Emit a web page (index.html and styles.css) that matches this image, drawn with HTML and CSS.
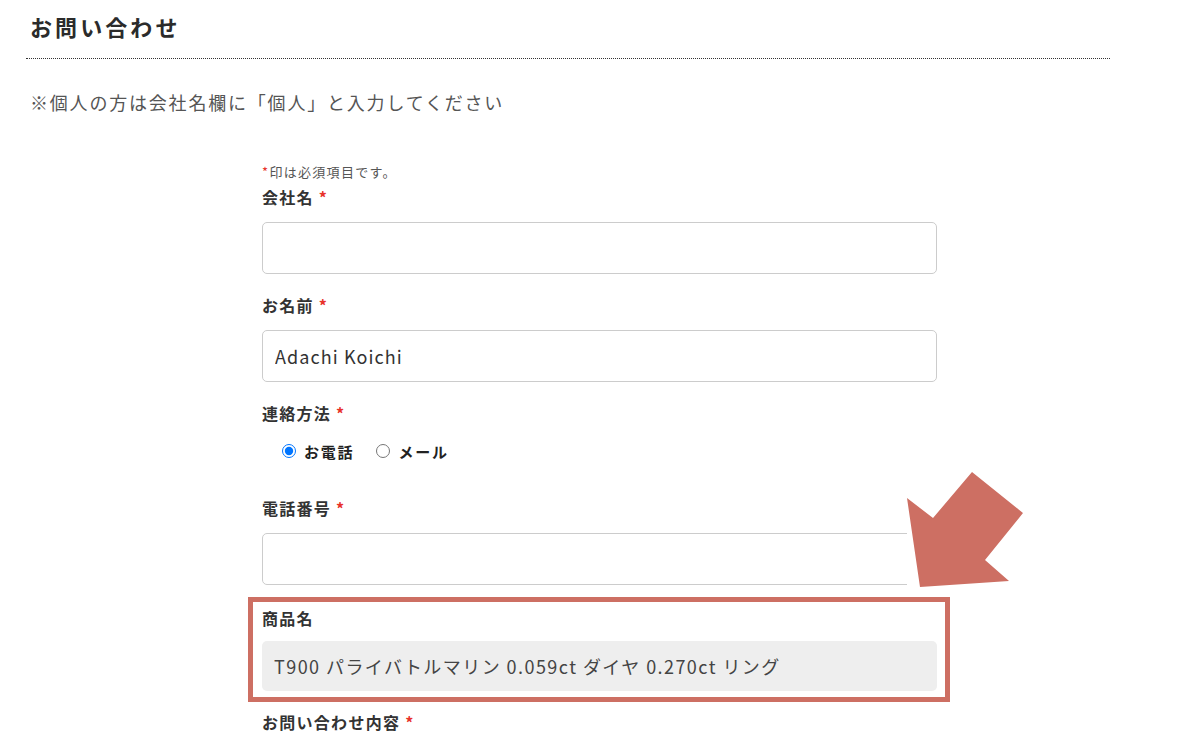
FILE: index.html
```html
<!DOCTYPE html>
<html lang="ja">
<head>
<meta charset="utf-8">
<link rel="stylesheet" href="styles.css">
</head>
<body>
<div class="page">
  <h1 class="title">お問い合わせ</h1>
  <hr class="rule">
  <p class="note">※個人の方は会社名欄に「個人」と入力してください</p>

  <form class="form">
    <p class="req-note"><span class="req">*</span>印は必須項目です。</p>

    <div class="field">
      <label class="label">会社名 <span class="req">*</span></label>
      <input class="input" type="text">
    </div>

    <div class="field">
      <label class="label">お名前 <span class="req">*</span></label>
      <input class="input" type="text" value="Adachi Koichi">
    </div>

    <div class="field field-radio">
      <label class="label">連絡方法 <span class="req">*</span></label>
      <div class="radios">
        <label class="radio"><input type="radio" name="c" checked>お電話</label>
        <label class="radio"><input type="radio" name="c">メール</label>
      </div>
    </div>

    <div class="field field-phone">
      <label class="label">電話番号 <span class="req">*</span></label>
      <input class="input" type="text">
    </div>

    <div class="highlight">
      <label class="label">商品名</label>
      <input class="input input-ro" type="text" value="T900 パライバトルマリン 0.059ct ダイヤ 0.270ct リング" readonly>
    </div>

    <div class="field">
      <label class="label">お問い合わせ内容 <span class="req">*</span></label>
    </div>
  </form>

  <svg class="arrow" width="126" height="130" viewBox="0 0 126 130" xmlns="http://www.w3.org/2000/svg">
    <rect x="0" y="72" width="36" height="58" fill="#ffffff"/>
    <polygon fill="#cd6f63" points="13,127 0,38 26,58 65,12 116,53 78,100 102,121"/>
  </svg>
</div>
</body>
</html>
```

FILE: styles.css
```css
html, body {
  margin: 0;
  padding: 0;
  background: #ffffff;
}

body {
  font-family: "Noto Sans CJK JP", "Noto Sans", sans-serif;
  color: #333333;
}

.page {
  position: relative;
  padding: 0 30px;
  height: 750px;
  overflow: hidden;
}

.title {
  margin: 0;
  padding-top: 10px;
  font-size: 22px;
  line-height: 32px;
  font-weight: 700;
  letter-spacing: 0.14em;
  color: #2b2b2b;
}

.rule {
  margin: 16px 60px 0 -4px;
  border: 0;
  border-top: 1px dotted #333333;
  height: 0;
}

.note {
  margin: 30px 0 0;
  font-size: 18px;
  line-height: 26px;
  letter-spacing: 0.1em;
  color: #555555;
}

.form {
  margin: 48px 0 0 232px;
  width: 675px;
}

.req-note {
  margin: 0 0 4px;
  font-size: 13px;
  line-height: 18px;
  letter-spacing: 0.1em;
  color: #555555;
}

.req {
  color: #e8322b;
}

.field {
  margin-bottom: 19px;
}

.label {
  display: block;
  font-size: 16px;
  line-height: 24px;
  font-weight: 700;
  letter-spacing: 0.08em;
  color: #333333;
  margin-bottom: 13px;
}

.input {
  display: block;
  box-sizing: border-box;
  width: 675px;
  height: 52px;
  margin: 0;
  padding: 0 12px;
  border: 1px solid #cccccc;
  border-radius: 5px;
  background: #ffffff;
  font-family: "Noto Sans CJK JP", "Noto Sans", sans-serif;
  font-size: 18px;
  letter-spacing: 0.06em;
  color: #333333;
  outline: none;
}

.field-radio {
  margin-bottom: 33px;
}

.field-radio .label {
  margin-bottom: 14px;
}

.radios {
  display: flex;
  align-items: center;
  gap: 22px;
  padding-left: 20px;
  height: 24px;
}

.radio {
  display: flex;
  align-items: center;
  font-size: 15px;
  font-weight: 700;
  letter-spacing: 0.12em;
  color: #222222;
}

.radio input {
  margin: 0 8px 0 0;
  width: 14px;
  height: 14px;
}

.field-phone {
  margin-bottom: 12px;
}

.highlight {
  margin: 0 0 8px -14px;
  width: 702px;
  box-sizing: border-box;
  border: 5px solid #cd6f63;
  padding: 4px 8px 6px 9px;
}

.highlight .label {
  margin-bottom: 11px;
}

.input-ro {
  height: 50px;
  border: 0;
  background: #eeeeee;
  color: #444444;
  letter-spacing: 0.08em;
}

.arrow {
  position: absolute;
  left: 907px;
  top: 460px;
}
```
